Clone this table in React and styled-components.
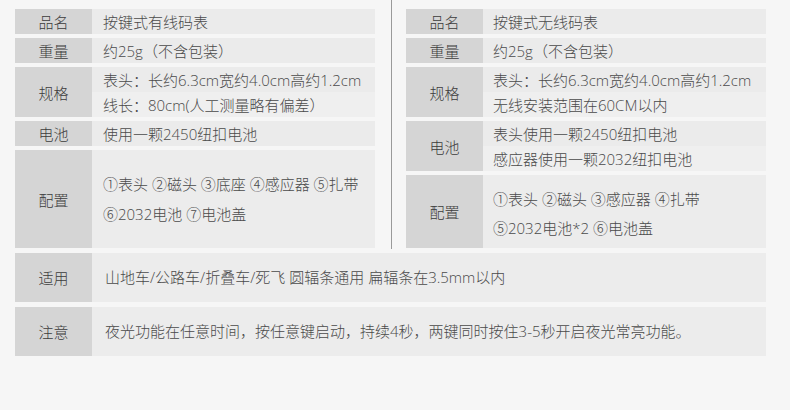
import React from 'react';
import styled, { createGlobalStyle } from 'styled-components';

const GlobalStyle = createGlobalStyle`
  html, body {
    margin: 0;
    padding: 0;
    background: #f6f6f6;
  }
  body {
    font-family: "Open Sans", "Noto Sans CJK SC", sans-serif;
    font-weight: 300;
    color: #444;
  }
`;

const Page = styled.div`
  width: 790px;
  height: 410px;
  padding: 0 15px;
  box-sizing: border-box;
  background: #f6f6f6;
`;

const TopSection = styled.div`
  display: grid;
  grid-template-columns: 360px 31px 360px;
`;

const Divider = styled.div`
  width: 1px;
  margin-left: 16px;
  background: #9a9a9a;
`;

const Table = styled.div`
  display: flex;
  flex-direction: column;
  gap: 4px;
  padding: 9px 0 1px;
`;

const Row = styled.div`
  display: flex;
  height: ${(p) => p.height || 25}px;
`;

const Label = styled.div`
  width: 77px;
  flex-shrink: 0;
  background: #d5d5d5;
  display: flex;
  align-items: center;
  justify-content: center;
  font-size: 15px;
  color: #3c3c3c;
`;

const Value = styled.div`
  flex: 1;
  display: flex;
  flex-direction: column;
  justify-content: center;
  background: #ececec;
  padding: ${(p) => p.pad || '0 0 0 11px'};
  font-size: 15px;
  color: #4a4a4a;
  line-height: ${(p) => p.lh || 25}px;
  white-space: nowrap;
`;

const Stacked = styled.div`
  flex: 1;
  display: flex;
  flex-direction: column;
`;

const Line = styled.div`
  flex: 1;
  display: flex;
  align-items: center;
  padding-left: ${(p) => p.indent || 11}px;
  background: ${(p) => (p.alt ? '#efefef' : '#ebebeb')};
  font-size: 15px;
  color: #4a4a4a;
  white-space: nowrap;
`;

const Bottom = styled.div`
  width: 751px;
  display: flex;
  flex-direction: column;
  gap: 5px;
  margin-top: 4px;
`;

const left = [
  { label: '品名', lines: ['按键式有线码表'] },
  { label: '重量', lines: ['约25g（不含包装）'] },
  { label: '规格', lines: ['表头：长约6.3cm宽约4.0cm高约1.2cm', '线长：80cm(人工测量略有偏差）'], h: 50 },
  { label: '电池', lines: ['使用一颗2450纽扣电池'] },
];

const right = [
  { label: '品名', lines: ['按键式无线码表'] },
  { label: '重量', lines: ['约25g（不含包装）'] },
  { label: '规格', lines: ['表头：长约6.3cm宽约4.0cm高约1.2cm', '无线安装范围在60CM以内'], h: 50 },
  { label: '电池', lines: ['表头使用一颗2450纽扣电池', '感应器使用一颗2032纽扣电池'], h: 50 },
];

const SpecRow = ({ item, indent }) => (
  <Row height={item.h}>
    <Label>{item.label}</Label>
    {item.lines.length > 1 ? (
      <Stacked>
        {item.lines.map((l, i) => (
          <Line key={i} alt={i % 2 === 1} indent={indent}>
            {l}
          </Line>
        ))}
      </Stacked>
    ) : (
      <Line indent={indent}>{item.lines[0]}</Line>
    )}
  </Row>
);

const App = () => (
  <Page>
    <GlobalStyle />
    <TopSection>
      <Table>
        {left.map((item) => (
          <SpecRow key={item.label} item={item} />
        ))}
        <Row height={98}>
          <Label>配置</Label>
          <Value lh={30}>
            <div>①表头 ②磁头 ③底座 ④感应器 ⑤扎带</div>
            <div>⑥2032电池 ⑦电池盖</div>
          </Value>
        </Row>
      </Table>
      <Divider />
      <Table>
        {right.map((item) => (
          <SpecRow key={item.label} item={item} indent={10} />
        ))}
        <Row height={73}>
          <Label>配置</Label>
          <Value lh={29} pad="5px 0 0 10px">
            <div>①表头 ②磁头 ③感应器 ④扎带</div>
            <div>⑤2032电池*2 ⑥电池盖</div>
          </Value>
        </Row>
      </Table>
    </TopSection>
    <Bottom>
      <Row height={49}>
        <Label>适用</Label>
        <Value pad="0 0 0 13px">山地车/公路车/折叠车/死飞 圆辐条通用 扁辐条在3.5mm以内</Value>
      </Row>
      <Row height={49}>
        <Label>注意</Label>
        <Value pad="0 0 0 13px">夜光功能在任意时间，按任意键启动，持续4秒，两键同时按住3-5秒开启夜光常亮功能。</Value>
      </Row>
    </Bottom>
  </Page>
);

export default App;
